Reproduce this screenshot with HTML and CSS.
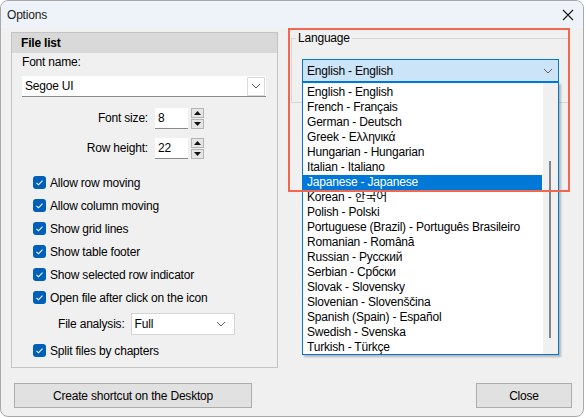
FILE: index.html
```html
<!DOCTYPE html>
<html lang="en">
<head>
    <meta charset="UTF-8">
    <title>Options</title>
    <link rel="stylesheet" href="styles.css">
</head>
<body>
    <div class="window">
        <!-- Title bar -->
        <div class="titlebar">
            <span class="title">Options</span>
            <svg class="close-x" width="12" height="12" viewBox="0 0 12 12">
                <path d="M1 1 L11 11 M11 1 L1 11" stroke="#1a1a1a" stroke-width="1.1" fill="none"/>
            </svg>
        </div>

        <div class="content">
            <!-- File list group -->
            <div class="file-group">
                <div class="group-header">File list</div>
                <div class="group-body">
                    <div class="field-label">Font name:</div>
                    <div class="combo">
                        <span>Segoe UI</span>
                        <span class="combo-btn">
                            <svg width="10" height="6" viewBox="0 0 10 6"><path d="M1 1 L5 5 L9 1" stroke="#606060" fill="none"/></svg>
                        </span>
                    </div>

                    <div class="spin-row first">
                        <span class="spin-label">Font size:</span>
                        <span class="spin-input">8</span>
                        <span class="spin-buttons">
                            <span class="spin-btn"><svg width="7" height="4" viewBox="0 0 7 4"><path d="M0 4 L3.5 0 L7 4Z" fill="#111"/></svg></span>
                            <span class="spin-btn"><svg width="7" height="4" viewBox="0 0 7 4"><path d="M0 0 L3.5 4 L7 0Z" fill="#111"/></svg></span>
                        </span>
                    </div>
                    <div class="spin-row">
                        <span class="spin-label">Row height:</span>
                        <span class="spin-input">22</span>
                        <span class="spin-buttons">
                            <span class="spin-btn"><svg width="7" height="4" viewBox="0 0 7 4"><path d="M0 4 L3.5 0 L7 4Z" fill="#111"/></svg></span>
                            <span class="spin-btn"><svg width="7" height="4" viewBox="0 0 7 4"><path d="M0 0 L3.5 4 L7 0Z" fill="#111"/></svg></span>
                        </span>
                    </div>

                    <div class="checks">
                        <div class="check"><svg class="box" width="13" height="13" viewBox="0 0 13 13"><rect width="13" height="13" rx="3" fill="#005fb8"/><path d="M3.5 6.8 L5.5 8.8 L9.5 4.6" stroke="#fff" stroke-width="1.1" fill="none"/></svg>Allow row moving</div>
                        <div class="check"><svg class="box" width="13" height="13" viewBox="0 0 13 13"><rect width="13" height="13" rx="3" fill="#005fb8"/><path d="M3.5 6.8 L5.5 8.8 L9.5 4.6" stroke="#fff" stroke-width="1.1" fill="none"/></svg>Allow column moving</div>
                        <div class="check"><svg class="box" width="13" height="13" viewBox="0 0 13 13"><rect width="13" height="13" rx="3" fill="#005fb8"/><path d="M3.5 6.8 L5.5 8.8 L9.5 4.6" stroke="#fff" stroke-width="1.1" fill="none"/></svg>Show grid lines</div>
                        <div class="check"><svg class="box" width="13" height="13" viewBox="0 0 13 13"><rect width="13" height="13" rx="3" fill="#005fb8"/><path d="M3.5 6.8 L5.5 8.8 L9.5 4.6" stroke="#fff" stroke-width="1.1" fill="none"/></svg>Show table footer</div>
                        <div class="check"><svg class="box" width="13" height="13" viewBox="0 0 13 13"><rect width="13" height="13" rx="3" fill="#005fb8"/><path d="M3.5 6.8 L5.5 8.8 L9.5 4.6" stroke="#fff" stroke-width="1.1" fill="none"/></svg>Show selected row indicator</div>
                        <div class="check"><svg class="box" width="13" height="13" viewBox="0 0 13 13"><rect width="13" height="13" rx="3" fill="#005fb8"/><path d="M3.5 6.8 L5.5 8.8 L9.5 4.6" stroke="#fff" stroke-width="1.1" fill="none"/></svg>Open file after click on the icon</div>
                        <div class="analysis-row">
                            <span>File analysis:</span>
                            <span class="select">
                                <span>Full</span>
                                <svg width="10" height="6" viewBox="0 0 10 6"><path d="M1 1 L5 5 L9 1" stroke="#606060" fill="none"/></svg>
                            </span>
                        </div>
                        <div class="check"><svg class="box" width="13" height="13" viewBox="0 0 13 13"><rect width="13" height="13" rx="3" fill="#005fb8"/><path d="M3.5 6.8 L5.5 8.8 L9.5 4.6" stroke="#fff" stroke-width="1.1" fill="none"/></svg>Split files by chapters</div>
                    </div>
                </div>
            </div>

            <!-- Language group -->
            <div class="lang-group">
                <div class="lang-frame">
                    <span class="lang-label">Language</span>
                    <div class="lang-combo">
                        <span>English - English</span>
                        <svg width="10" height="6" viewBox="0 0 10 6"><path d="M1 1 L5 5 L9 1" stroke="#606060" fill="none"/></svg>
                    </div>
                </div>
            </div>
        </div>

        <div class="footer">
            <button class="btn shortcut-btn">Create shortcut on the Desktop</button>
            <button class="btn close-btn">Close</button>
        </div>

        <!-- Open dropdown list -->
        <div class="dropdown">
            <div class="items">
                <div class="item">English - English</div>
                <div class="item">French - Français</div>
                <div class="item">German - Deutsch</div>
                <div class="item">Greek - Ελληνικά</div>
                <div class="item">Hungarian - Hungarian</div>
                <div class="item">Italian - Italiano</div>
                <div class="item selected">Japanese - Japanese</div>
                <div class="item">Korean - 한국어</div>
                <div class="item">Polish - Polski</div>
                <div class="item">Portuguese (Brazil) - Português Brasileiro</div>
                <div class="item">Romanian - Română</div>
                <div class="item">Russian - Русский</div>
                <div class="item">Serbian - Србски</div>
                <div class="item">Slovak - Slovensky</div>
                <div class="item">Slovenian - Slovenščina</div>
                <div class="item">Spanish (Spain) - Español</div>
                <div class="item">Swedish - Svenska</div>
                <div class="item">Turkish - Türkçe</div>
            </div>
            <div class="scrollbar"><div class="thumb"></div></div>
        </div>

        <!-- Highlight annotation -->
        <div class="highlight"></div>
    </div>
</body>
</html>
```

FILE: styles.css
```css
* {
    box-sizing: border-box;
}

body {
    margin: 0;
    background: #ffffff;
    font-family: "Liberation Sans", "Noto Sans CJK KR", sans-serif;
    font-size: 12px;
    letter-spacing: -0.2px;
    color: #000;
}

.window {
    position: relative;
    width: 584px;
    height: 417px;
    border: 1px solid #a8a8a8;
    border-radius: 8px;
    background: #f0f0f0;
    overflow: hidden;
}

.titlebar {
    height: 27px;
    background: #eef3f9;
    display: flex;
    align-items: center;
    justify-content: space-between;
    padding: 0 9px 0 6px;
}

.title {
    font-size: 12px;
    color: #1a1a1a;
}

.content {
    display: flex;
    padding: 4px 0 0 10px;
    height: 349px;
}

/* File list */
.file-group {
    width: 267px;
    height: 336px;
    border: 1px solid #c4c4c4;
}

.group-header {
    height: 20px;
    background: #d9d9d9;
    font-weight: bold;
    padding: 3px 0 0 9px;
}

.group-body {
    padding: 0 10px 0 10px;
}

.field-label {
    margin-top: 2px;
    height: 15px;
}

.combo {
    margin-top: 6px;
    height: 21px;
    width: 244px;
    background: #fff;
    border-bottom: 1px solid #8a8a8a;
    display: flex;
    align-items: center;
    justify-content: space-between;
    padding: 0 0 0 3px;
}

.combo-btn {
    width: 18px;
    height: 19px;
    border: 1px solid #dadada;
    margin-right: 1px;
    display: flex;
    align-items: center;
    justify-content: center;
}

.spin-row {
    display: flex;
    align-items: center;
    margin-top: 8px;
    height: 22px;
}

.spin-row.first {
    margin-top: 10px;
}

.spin-label {
    width: 126px;
    text-align: right;
}

.spin-input {
    margin-left: 7px;
    width: 33px;
    height: 21px;
    background: #fff;
    border-bottom: 1px solid #8a8a8a;
    padding: 3px 0 0 3px;
}

.spin-buttons {
    margin-left: 3px;
    display: flex;
    flex-direction: column;
    gap: 1px;
}

.spin-btn {
    width: 13px;
    height: 10px;
    border: 1px solid #b4b4b4;
    background: #e6e6e6;
    display: flex;
    align-items: center;
    justify-content: center;
}

.checks {
    margin-top: 12px;
    padding-left: 11px;
}

.check {
    display: flex;
    align-items: center;
    height: 23px;
}

.check .box {
    margin-right: 4px;
}

.analysis-row {
    display: flex;
    align-items: center;
    height: 30px;
    padding-left: 25px;
    gap: 6px;
}

.select {
    width: 104px;
    height: 22px;
    background: #fff;
    border: 1px solid #d4d4d4;
    display: flex;
    align-items: center;
    justify-content: space-between;
    padding: 0 8px 0 3px;
}

/* Language */
.lang-group {
    margin-left: 13px;
    padding-top: 6px;
}

.lang-frame {
    position: relative;
    width: 279px;
    height: 65px;
    border: 1px solid #d6d6d6;
    padding: 20px 0 0 10px;
}

.lang-label {
    position: absolute;
    top: -8px;
    left: 4px;
    padding: 0 2px;
    background: #f0f0f0;
}

.lang-combo {
    width: 257px;
    height: 23px;
    background: #cce4f7;
    border: 1px solid #0078d7;
    display: flex;
    align-items: center;
    justify-content: space-between;
    padding: 0 5px 0 4px;
}

.footer {
    display: flex;
    justify-content: space-between;
    padding: 6px 11px 0 13px;
}

.btn {
    height: 25px;
    background: #e1e1e1;
    border: 1px solid #adadad;
    font-family: inherit;
    font-size: 12px;
    letter-spacing: inherit;
    color: #000;
}

.shortcut-btn {
    width: 238px;
}

.close-btn {
    width: 96px;
}

.dropdown {
    position: absolute;
    left: 301px;
    top: 81px;
    width: 257px;
    height: 273px;
    background: #fff;
    border: 1px solid #0078d7;
    box-shadow: 2px 2px 2px rgba(0, 0, 0, 0.25);
    display: flex;
}

.items {
    flex: 1;
    padding-top: 2px;
}

.item {
    height: 15px;
    line-height: 15px;
    padding-left: 4px;
    margin-right: 1px;
    white-space: nowrap;
}

.item.selected {
    background: #0078d7;
    color: #fff;
}

.scrollbar {
    width: 15px;
    background: #f0f0f0;
    position: relative;
}

.thumb {
    position: absolute;
    left: 6px;
    top: 78px;
    width: 2px;
    height: 177px;
    background: #858585;
}

.highlight {
    position: absolute;
    left: 287px;
    top: 27px;
    width: 282px;
    height: 164px;
    border: 2px solid #f2674f;
}
```
